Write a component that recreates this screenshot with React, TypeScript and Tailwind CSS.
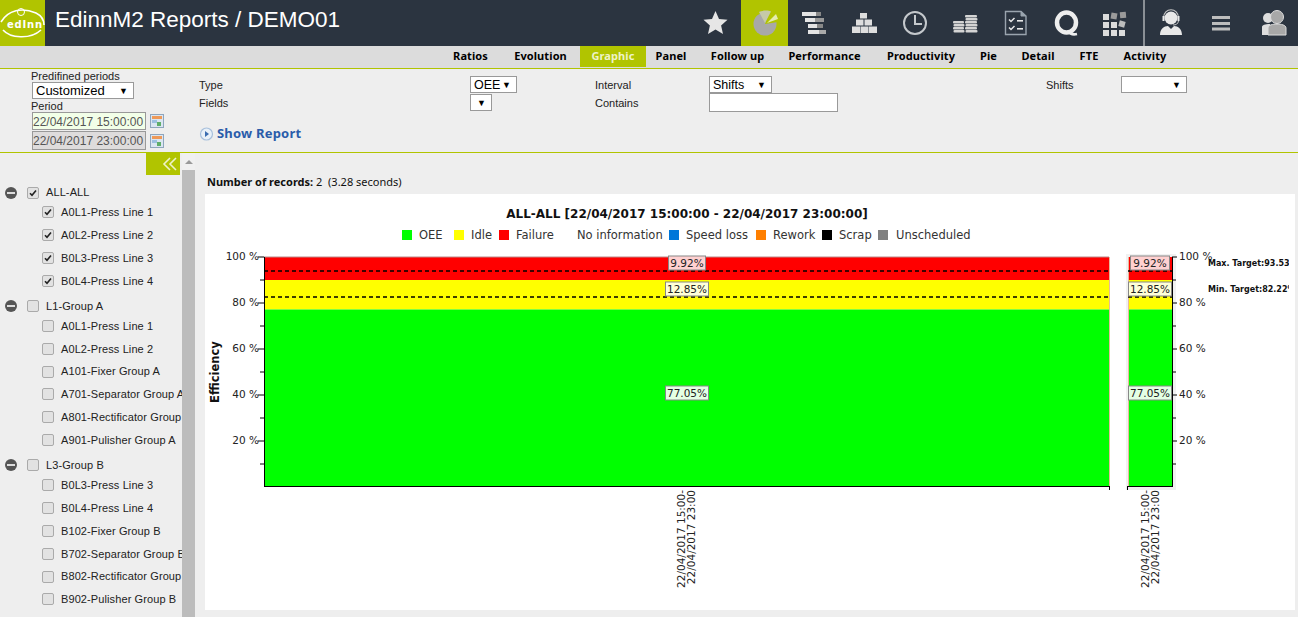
const labelFont = "font-['Liberation_Sans',sans-serif]";

const tabs = [
  { label: "Ratios", w: "w-[61px]" },
  { label: "Evolution", w: "w-[79px]" },
  { label: "Graphic", w: "w-[66px]", active: true },
  { label: "Panel", w: "w-[50px]" },
  { label: "Follow up", w: "w-[83px]" },
  { label: "Performance", w: "w-[91px]" },
  { label: "Productivity", w: "w-[102px]" },
  { label: "Pie", w: "w-[33px]" },
  { label: "Detail", w: "w-[66px]" },
  { label: "FTE", w: "w-[36px]" },
  { label: "Activity", w: "w-[76px]" },
];

const groups = [
  {
    name: "ALL-ALL",
    checked: true,
    items: ["A0L1-Press Line 1", "A0L2-Press Line 2", "B0L3-Press Line 3", "B0L4-Press Line 4"],
  },
  {
    name: "L1-Group A",
    checked: false,
    items: [
      "A0L1-Press Line 1",
      "A0L2-Press Line 2",
      "A101-Fixer Group A",
      "A701-Separator Group A",
      "A801-Rectificator Group A",
      "A901-Pulisher Group A",
    ],
  },
  {
    name: "L3-Group B",
    checked: false,
    items: [
      "B0L3-Press Line 3",
      "B0L4-Press Line 4",
      "B102-Fixer Group B",
      "B702-Separator Group B",
      "B802-Rectificator Group B",
      "B902-Pulisher Group B",
    ],
  },
];

const legend = [
  { x: 402, color: "#00ff00", label: "OEE", tx: 419 },
  { x: 454, color: "#ffff00", label: "Idle", tx: 471 },
  { x: 499, color: "#ff0000", label: "Failure", tx: 516 },
  { x: 0, color: "", label: "No information", tx: 577 },
  { x: 669, color: "#0077d9", label: "Speed loss", tx: 686 },
  { x: 756, color: "#ff7f00", label: "Rework", tx: 773 },
  { x: 822, color: "#000000", label: "Scrap", tx: 839 },
  { x: 878, color: "#808080", label: "Unscheduled", tx: 896 },
];

const Icon = ({ children, active }: { children: React.ReactNode; active?: boolean }) => (
  <div className={`w-[47px] h-[46px] ${active ? "bg-[#b1c400]" : ""}`}>
    <svg width="47" height="46" viewBox="0 0 47 46">
      {children}
    </svg>
  </div>
);

const Checkbox = ({ checked }: { checked: boolean }) => (
  <span className="w-[12px] h-[12px] shrink-0 rounded-[2px] border border-[#aaa] bg-[#e2e2e2] flex items-center justify-center">
    {checked && (
      <svg width="8" height="8" viewBox="0 0 8 8">
        <path d="M1 4.2 L3 6.3 L7 1.5" fill="none" stroke="#222" strokeWidth="1.6" />
      </svg>
    )}
  </span>
);

const Calendar = () => (
  <svg width="14" height="14" viewBox="0 0 14 14" className="shrink-0">
    <rect x="0.5" y="0.5" width="13" height="13" fill="#dbe6f2" stroke="#8fa6bd" />
    <rect x="2" y="2" width="10" height="3" fill="#ee9a5a" />
    <rect x="2" y="6" width="5" height="3" fill="#9cc0e0" />
    <rect x="7" y="8" width="4" height="4" fill="#5fae6a" />
  </svg>
);

const FakeSelect = ({ w, text, big }: { w: string; text: string; big?: boolean }) => (
  <div
    className={`${w} h-[17px] border border-[#999] bg-white flex items-center justify-between pl-[3px] pr-[5px] pt-[1px] text-black ${
      big ? "text-[13px]" : "text-[12.5px]"
    }`}
  >
    <span>{text}</span>
    <span className="text-[9px] leading-none">▼</span>
  </div>
);

const Tick = ({ y, long }: { y: number; long?: boolean }) => (
  <>
    <line x1={long ? 258 : 260} x2="264" y1={y} y2={y} stroke="#000" />
    <line x1="1172" x2={long ? 1177 : 1176} y1={y} y2={y} stroke="#000" />
  </>
);

const ValueBox = ({ cx, y, w, fill, text }: { cx: number; y: number; w: number; fill: string; text: string }) => (
  <g>
    <rect x={cx - w / 2} y={y - 7} width={w} height={14} fill={fill} stroke="#888" />
    <text x={cx} y={y + 4} textAnchor="middle" fontSize="10.5" fill="#222">
      {text}
    </text>
  </g>
);

const DateLabel = ({ x }: { x: number }) => (
  <g fontSize="10.5" fill="#222" textAnchor="end">
    <text transform={`translate(${x} 490) rotate(-90)`}>22/04/2017 15:00-</text>
    <text transform={`translate(${x + 10} 490) rotate(-90)`}>22/04/2017 23:00</text>
  </g>
);

const Chart = () => (
  <svg width="1090" height="416" viewBox="205 194 1090 416" className="font-['DejaVu_Sans',sans-serif]">
    <text x="687" y="218" textAnchor="middle" fontSize="12" fontWeight="bold" fill="#111">
      ALL-ALL [22/04/2017 15:00:00 - 22/04/2017 23:00:00]
    </text>
    {legend.map((l) => (
      <g key={l.label}>
        {l.color && <rect x={l.x} y="230" width="10" height="10" fill={l.color} />}
        <text x={l.tx} y="239" fontSize="11.5" fill="#333">
          {l.label}
        </text>
      </g>
    ))}

    {/* main bar */}
    <rect x="264" y="257" width="845" height="23" fill="#ff0000" />
    <rect x="264" y="280" width="845" height="29.5" fill="#ffff00" />
    <rect x="264" y="309.5" width="845" height="176.5" fill="#00ff00" />
    <rect x="1109" y="257" width="1" height="229" fill="#e8b89a" />
    <line x1="264" x2="1109" y1="257" y2="257" stroke="#b88" />

    {/* small bar */}
    <rect x="1126" y="254" width="50" height="236" fill="#f1f1f1" />
    <rect x="1128" y="257" width="44" height="23" fill="#ff0000" />
    <rect x="1128" y="280" width="44" height="29.5" fill="#ffff00" />
    <rect x="1128" y="309.5" width="44" height="176.5" fill="#00ff00" />
    <rect x="1128" y="257" width="1" height="229" fill="#e8b89a" />

    <line x1="264.5" x2="264.5" y1="257" y2="487" stroke="#000" />
    <line x1="264" x2="1110" y1="486.5" y2="486.5" stroke="#000" />
    <line x1="1127" x2="1173" y1="486.5" y2="486.5" stroke="#000" />
    <line x1="1172.5" x2="1172.5" y1="257" y2="487" stroke="#000" />
    <line x1="1109.5" x2="1109.5" y1="486" y2="490" stroke="#000" />
    <line x1="1127.5" x2="1127.5" y1="486" y2="490" stroke="#000" />

    <Tick y={257} long />
    <Tick y={280} />
    <Tick y={303} long />
    <Tick y={326} />
    <Tick y={349} long />
    <Tick y={372} />
    <Tick y={395} long />
    <Tick y={418} />
    <Tick y={441} long />
    <Tick y={464} />

    {["100 %", "80 %", "60 %", "40 %", "20 %"].map((t, i) => (
      <g key={t} fontSize="10.5" fill="#222">
        <text x="259" y={260 + i * 46} textAnchor="end">
          {t}
        </text>
        <text x="1179" y={260 + i * 46}>
          {t}
        </text>
      </g>
    ))}

    <g stroke="#000" strokeWidth="1.6" strokeDasharray="4 3">
      <line x1="264" x2="1109" y1="271" y2="271" />
      <line x1="264" x2="1109" y1="297" y2="297" />
      <line x1="1128" x2="1172" y1="271" y2="271" />
      <line x1="1128" x2="1172" y1="297" y2="297" />
    </g>

    <ValueBox cx={687} y={263} w={37} fill="#ffd0d0" text="9.92%" />
    <ValueBox cx={687} y={289} w={43} fill="#ffffd8" text="12.85%" />
    <ValueBox cx={687} y={393} w={43} fill="#e4ffe4" text="77.05%" />
    <ValueBox cx={1150} y={263} w={39} fill="#ffd0d0" text="9.92%" />
    <ValueBox cx={1150} y={289} w={43} fill="#ffffd8" text="12.85%" />
    <ValueBox cx={1150} y={393} w={43} fill="#e4ffe4" text="77.05%" />

    <text transform="translate(219 372) rotate(-90)" textAnchor="middle" fontSize="11.5" fontWeight="bold" fill="#111">
      Efficiency
    </text>

    <DateLabel x={685} />
    <DateLabel x={1149} />

    <svg x="1208" y="255" width="81" height="40" viewBox="0 0 81 40">
      <text x="0" y="11" fontSize="8" fontWeight="bold" fill="#111">
        Max. Target:93.53%
      </text>
      <text x="0" y="37" fontSize="8" fontWeight="bold" fill="#111">
        Min. Target:82.22%
      </text>
    </svg>
  </svg>
);

export default function App() {
  return (
    <div className={`w-[1298px] h-[617px] overflow-hidden bg-[#eeeeee] ${labelFont} text-[11px] text-[#222]`}>
      {/* top bar */}
      <header className="h-[46px] bg-[#2b3440] flex items-center">
        <div className="w-[45px] h-[46px] bg-[#b1c400]">
          <svg width="45" height="46" viewBox="0 0 45 46">
            <path d="M1 22 C8 10 22 7 36 13 C42 16 44 21 44 25" fill="none" stroke="#fff" strokeWidth="1.6" />
            <path d="M3 30 C10 38 30 40 41 30" fill="none" stroke="#fff" strokeWidth="1.6" />
            <circle cx="21" cy="12" r="3.5" fill="none" stroke="#fff" strokeWidth="1" />
            <text x="7" y="28" fontSize="10" fontWeight="bold" fill="#fff" letterSpacing="0.8" fontFamily="DejaVu Sans">
              edInn
            </text>
          </svg>
        </div>
        <h1 className="ml-[10px] text-[22.5px] font-normal text-white whitespace-nowrap -mt-[6px]">
          EdinnM2 Reports / DEMO01
        </h1>
        <div className="ml-auto flex items-center gap-[3px] pr-[3px]">
          <Icon>
            <polygon points="24.5,11 28,19 36.5,19.7 30.1,25.4 32,34 24.5,29.5 17,34 18.9,25.4 12.5,19.7 21,19" fill="#e6e6e6" />
          </Icon>
          <Icon active>
            <circle cx="24" cy="24" r="11.5" fill="#a8a8a8" />
            <path d="M24 24 L29 9 L42 16 L37 22 Z" fill="#b1c400" />
            <path d="M24 23 L18 12 C21 10.5 27 10 30 11.5 Z" fill="#c6c9a8" />
            <path d="M26 23 L35 14 L37 19 Z" fill="#e4ecae" />
          </Icon>
          <Icon>
            <rect x="11" y="12" width="14" height="4" fill="#e4e4e4" />
            <rect x="25" y="12" width="5" height="4" fill="#888" />
            <rect x="14" y="18" width="10" height="4" fill="#e4e4e4" />
            <rect x="24" y="18" width="9" height="4" fill="#999" />
            <rect x="17" y="24" width="9" height="4" fill="#e4e4e4" />
            <rect x="26" y="24" width="6" height="4" fill="#888" />
            <rect x="17" y="30" width="11" height="4" fill="#e4e4e4" />
            <rect x="28" y="30" width="7" height="4" fill="#aaa" />
          </Icon>
          <Icon>
            <g fill="#dedede">
              <rect x="19" y="13" width="7" height="5.5" />
              <rect x="15" y="19.5" width="7.5" height="6" />
              <rect x="23.5" y="19.5" width="7.5" height="6" />
              <rect x="11" y="26.5" width="8" height="6.5" />
              <rect x="19.5" y="26.5" width="8" height="6.5" />
              <rect x="28" y="26.5" width="8" height="6.5" />
            </g>
          </Icon>
          <Icon>
            <circle cx="24" cy="23" r="11" fill="none" stroke="#c4c8cc" strokeWidth="2" />
            <path d="M24 15 V24 H31" fill="none" stroke="#c4c8cc" strokeWidth="2" />
          </Icon>
          <Icon>
            <g fill="#d4d4d4">
              <rect x="24" y="15" width="12" height="2.4" rx="1" />
              <rect x="24.5" y="18" width="12" height="2.4" rx="1" />
              <rect x="24" y="21" width="12" height="2.4" rx="1" />
              <rect x="12" y="21" width="11" height="2.4" rx="1" />
              <rect x="12.5" y="24" width="11" height="2.4" rx="1" />
              <rect x="24.5" y="24" width="12" height="2.4" rx="1" />
              <rect x="12" y="27" width="11" height="2.4" rx="1" />
              <rect x="24" y="27" width="12" height="2.4" rx="1" />
              <rect x="12.5" y="30" width="11" height="2.4" rx="1" />
              <rect x="24.5" y="30" width="12" height="2.4" rx="1" />
            </g>
          </Icon>
          <Icon>
            <path d="M14.5 11.5 H30 L35 16 V34.5 H14.5 Z" fill="none" stroke="#9aa4ae" strokeWidth="1.4" />
            <path d="M30 11.5 V16 H35" fill="#9aa4ae" stroke="#9aa4ae" />
            <path d="M18 19.5 L20 21.5 L23.5 18" fill="none" stroke="#e8e8e8" strokeWidth="1.5" />
            <path d="M18 27.5 L20 29.5 L23.5 26" fill="none" stroke="#e8e8e8" strokeWidth="1.5" />
            <rect x="26" y="20" width="6" height="1.6" fill="#e8e8e8" />
            <rect x="26" y="28" width="6" height="1.6" fill="#e8e8e8" />
          </Icon>
          <Icon>
            <ellipse cx="25.5" cy="22.5" rx="9.5" ry="10" fill="none" stroke="#eeeeee" strokeWidth="4.5" />
            <path d="M27 31 C29 34 32 35 36 34" fill="none" stroke="#eeeeee" strokeWidth="2.5" />
          </Icon>
          <Icon>
            <g fill="#dcdcdc">
              <rect x="12" y="14" width="6" height="6" />
              <rect x="12" y="22" width="6" height="6" />
              <rect x="20" y="22" width="6" height="6" />
              <rect x="12" y="30" width="6" height="6" />
              <rect x="20" y="30" width="6" height="6" />
              <rect x="28" y="30" width="6" height="6" />
            </g>
            <g fill="#9a9a9a">
              <rect x="20" y="13" width="6" height="6" transform="rotate(10 23 16)" />
              <rect x="29" y="12" width="6" height="6" transform="rotate(-5 32 15)" />
            </g>
            <rect x="28" y="21" width="6" height="6" fill="#bdbdbd" transform="rotate(15 31 24)" />
          </Icon>
          <div className="w-[2px] h-[46px] ml-[2px] bg-[#8a8f95]" />
          <Icon>
            <circle cx="23" cy="18" r="6.5" fill="#e8e8e8" />
            <path d="M15.5 18 C15.5 7 30.5 7 30.5 18" fill="none" stroke="#c4c4c4" strokeWidth="1.2" />
            <rect x="14.5" y="16" width="2" height="5" fill="#e8e8e8" />
            <rect x="29.5" y="16" width="2" height="5" fill="#e8e8e8" />
            <path d="M30.5 21 C30 24 28 25 25 25" fill="none" stroke="#c4c4c4" />
            <path d="M12 35 C12 29 16 26 20 26 L23 29 L26 26 C30 26 34 29 34 35 Z" fill="#e8e8e8" />
          </Icon>
          <Icon>
            <rect x="14" y="16" width="18" height="3" fill="#bdbdbd" />
            <rect x="14" y="22" width="18" height="3" fill="#bdbdbd" />
            <rect x="14" y="27.5" width="18" height="3" fill="#bdbdbd" />
          </Icon>
          <Icon>
            <circle cx="20" cy="18" r="5" fill="#dddddd" />
            <path d="M14 35 V27 C14 25 17 24 22 24 V35 Z" fill="#dddddd" />
            <circle cx="29" cy="17" r="6.5" fill="#a8a8a8" stroke="#dddddd" />
            <path d="M20 35 V28 C20 25 25 24 29 24 C33 24 38 25 38 28 V35 Z" fill="#a8a8a8" stroke="#dddddd" />
          </Icon>
        </div>
      </header>

      {/* tabs */}
      <nav className="h-[23px] bg-[#dcdcdc] border-b border-[#b1c400] flex pl-[440px] font-['Noto_Sans',sans-serif] font-bold tracking-[0.1px] text-black">
        {tabs.map((t) => (
          <div
            key={t.label}
            className={`${t.w} h-[21px] flex items-center justify-center whitespace-nowrap ${
              t.active ? "bg-[#b1c400] text-[#eef3c8]" : ""
            }`}
          >
            {t.label}
          </div>
        ))}
      </nav>

      {/* filters */}
      <section className="h-[84px] border-b border-[#b1c400] flex pl-[31px]">
        <div className="w-[168px] flex flex-col">
          <span className="h-[13px] leading-[15px]">Predifined periods</span>
          <div className="ml-[1px]">
            <FakeSelect w="w-[102px]" text="Customized" big />
          </div>
          <span className="h-[13px] leading-[15px]">Period</span>
          <div className="ml-[1px] flex items-center gap-[4px]">
            <div className="w-[114px] h-[18px] border border-[#999] bg-[#f2ffe8] pt-[1px] text-[12px] text-[#555] flex items-center whitespace-nowrap">
              22/04/2017 15:00:00
            </div>
            <Calendar />
          </div>
          <div className="ml-[1px] flex items-center gap-[4px] mt-[1px]">
            <div className="w-[114px] h-[19px] border border-[#999] bg-[#dedcdc] text-[12px] text-[#555] flex items-center whitespace-nowrap">
              22/04/2017 23:00:00
            </div>
            <Calendar />
          </div>
        </div>
        <div className="w-[271px] flex flex-col pt-[7px]">
          <span className="h-[18px] leading-[18px]">Type</span>
          <span className="h-[18px] leading-[18px]">Fields</span>
          <div className="mt-[12px] flex items-center gap-[3px] font-['Noto_Sans',sans-serif] text-[13px] tracking-[0.2px] font-bold text-[#2a5caa]">
            <svg width="15" height="15" viewBox="0 0 15 15" className="shrink-0">
              <circle cx="7.5" cy="8" r="6" fill="#e8f0f8" stroke="#a8c0dc" strokeWidth="1.2" />
              <path d="M6 5 L10 8 L6 11 Z" fill="#3a6cb0" />
            </svg>
            Show Report
          </div>
        </div>
        <div className="w-[125px] flex flex-col gap-[1px] pt-[7px]">
          <FakeSelect w="w-[47px]" text="OEE" />
          <FakeSelect w="w-[22px]" text="" />
        </div>
        <div className="w-[114px] flex flex-col pt-[7px]">
          <span className="h-[18px] leading-[18px]">Interval</span>
          <span className="h-[18px] leading-[18px]">Contains</span>
        </div>
        <div className="w-[337px] flex flex-col pt-[7px]">
          <FakeSelect w="w-[63px]" text="Shifts" />
          <div className="w-[129px] h-[19px] border border-[#999] bg-white" />
        </div>
        <div className="w-[75px] pt-[7px]">
          <span className="block h-[18px] leading-[18px]">Shifts</span>
        </div>
        <div className="pt-[7px]">
          <FakeSelect w="w-[66px]" text="" />
        </div>
      </section>

      <div className="flex h-[465px]">
        {/* tree */}
        <aside className="w-[182px] shrink-0 overflow-hidden">
          <div className="flex justify-end pr-[2px]">
            <div className="w-[34px] h-[22px] bg-[#b1c400] flex items-center justify-end pr-[2px]">
              <svg width="16" height="14" viewBox="0 0 16 14">
                <path d="M8 1 L2 7 L8 13 M14 1 L8 7 L14 13" fill="none" stroke="#eef2c8" strokeWidth="1.6" />
              </svg>
            </div>
          </div>
          <div className="flex flex-col gap-[5.5px] pt-[9px] tracking-[0.1px]">
            {groups.map((g) => (
              <div key={g.name}>
                <div className="h-[17px] flex items-center pl-[5px] whitespace-nowrap">
                  <span className="w-[12px] h-[12px] rounded-full bg-[#555] flex items-center justify-center shrink-0">
                    <span className="w-[8px] h-[2px] bg-[#ddd]" />
                  </span>
                  <span className="ml-[10px]">
                    <Checkbox checked={g.checked} />
                  </span>
                  <span className="ml-[7px]">{g.name}</span>
                </div>
                {g.items.map((item) => (
                  <div key={item} className="h-[22.8px] flex items-center pl-[42px] gap-[7px] whitespace-nowrap">
                    <Checkbox checked={g.checked} />
                    <span>{item}</span>
                  </div>
                ))}
              </div>
            ))}
          </div>
        </aside>

        {/* scrollbar */}
        <div className="w-[13px] shrink-0 flex flex-col">
          <div className="h-[17px] flex items-center justify-center bg-[#f0f0f0]">
            <span className="w-0 h-0 border-x-[4px] border-x-transparent border-b-[4px] border-b-[#999]" />
          </div>
          <div className="flex-1 bg-[#bcbcbc]" />
        </div>

        {/* report */}
        <main className="flex-1 pl-[10px]">
          <p className="h-[41px] pt-[21px] pl-[2px] leading-[16px] font-['Noto_Sans',sans-serif] text-[#111]">
            <b>Number of records:</b> 2 &nbsp;(3.28 seconds)
          </p>
          <div className="w-[1090px] h-[416px] bg-white">
            <Chart />
          </div>
        </main>
      </div>
    </div>
  );
}
